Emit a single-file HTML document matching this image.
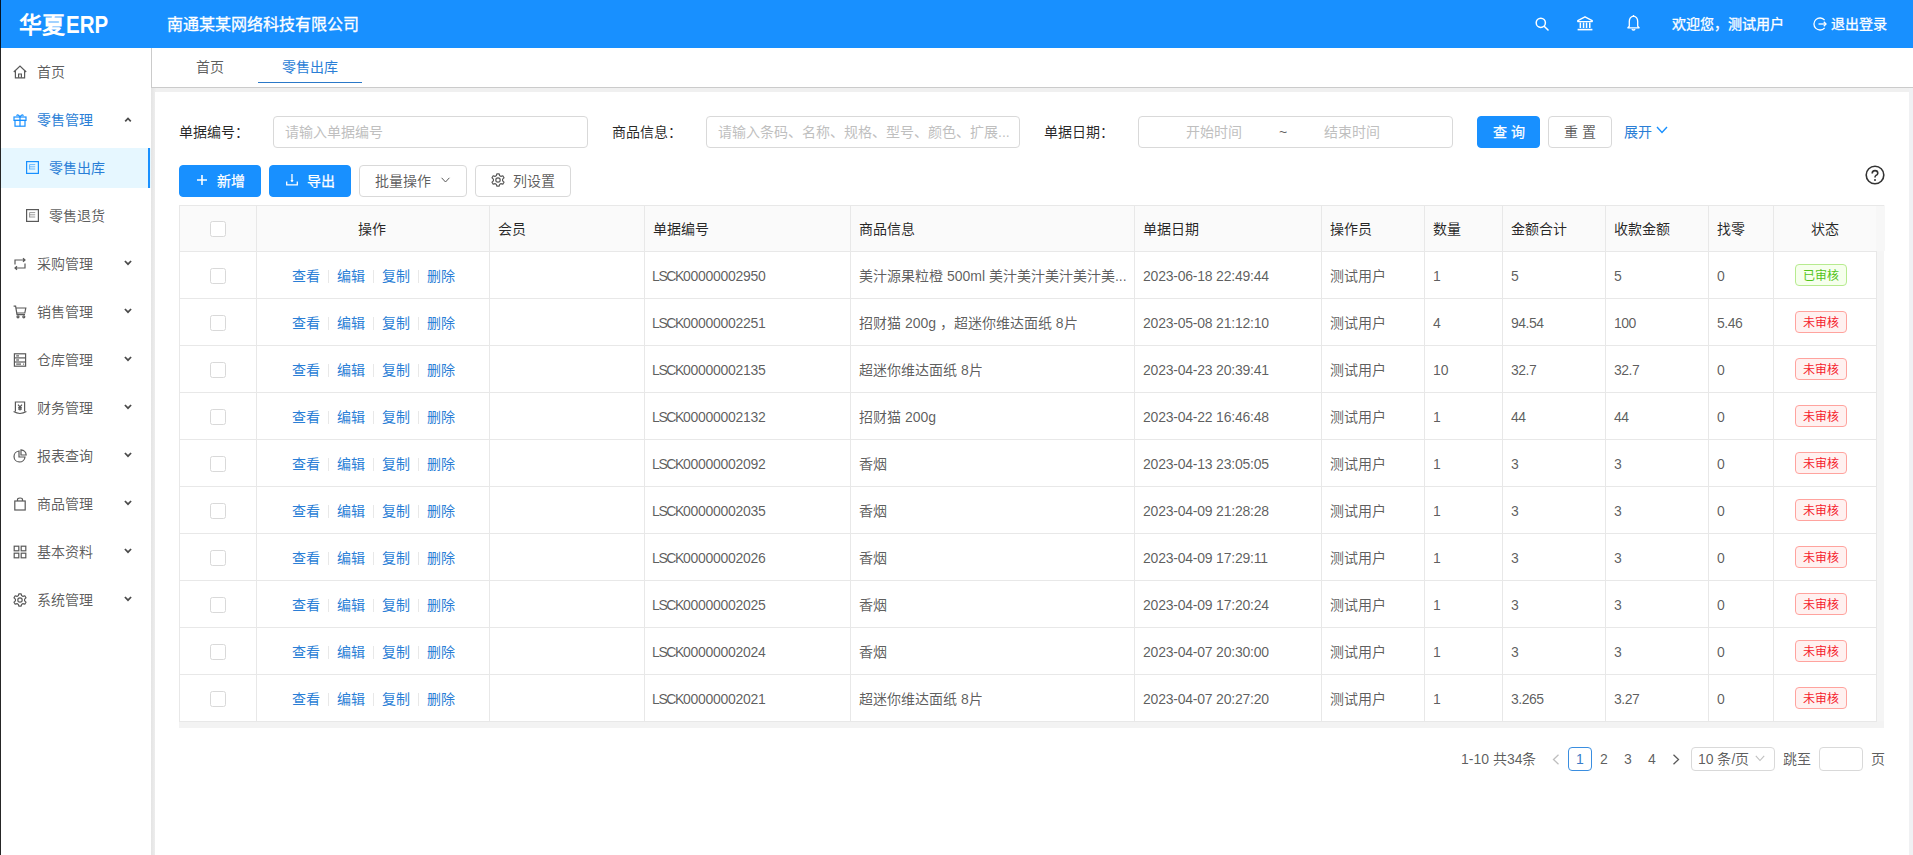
<!DOCTYPE html>
<html lang="zh-CN"><head><meta charset="utf-8"><title>零售出库</title><style>
*{margin:0;padding:0;box-sizing:border-box}
html,body{width:1913px;height:855px;overflow:hidden;background:#fff;font-family:"Liberation Sans", sans-serif;}
.a{position:absolute}
.t{position:absolute;white-space:nowrap;line-height:20px}
.ln{position:absolute;background:#e8e8e8}
.btn{position:absolute;height:32px;border-radius:4px;border:1px solid #d9d9d9;background:#fff}
.inp{position:absolute;height:32px;border-radius:4px;border:1px solid #d9d9d9;background:#fff}
.tag{position:absolute;height:22px;width:52px;border-radius:4px;border:1px solid;font-size:12px;line-height:22px;text-align:center}
.ok{color:#52c41a;background:#f6ffed;border-color:#b7eb8f}
.no{color:#f5222d;background:#fff1f0;border-color:#ffa39e}
svg{position:absolute;overflow:visible}
</style></head>
<body>
<div class="a" style="left:0;top:0;width:1913px;height:48px;background:#1890ff"></div>
<div class="t" style="left:19px;top:11px;line-height:28px;font-size:23px;font-weight:bold;color:#fff">华夏<span style="display:inline-block;font-size:23px;transform:scaleX(0.89);transform-origin:0 50%;margin-left:1px">ERP</span></div>
<div class="t" style="left:167px;top:15px;font-size:16px;color:#fff;-webkit-text-stroke:0.3px #fff">南通某某网络科技有限公司</div>
<svg style="left:1535px;top:17px" width="14" height="14" viewBox="0 0 14 14"><circle cx="5.8" cy="5.8" r="4.6" fill="none" stroke="#fff" stroke-width="1.5"/><line x1="9.2" y1="9.2" x2="13" y2="13" stroke="#fff" stroke-width="1.6" stroke-linecap="round"/></svg>
<svg style="left:1577px;top:16px" width="16" height="15" viewBox="0 0 16 15"><path d="M8 0.8 L15.2 4.6 L15.2 5.6 L0.8 5.6 L0.8 4.6 Z" fill="none" stroke="#fff" stroke-width="1.4" stroke-linejoin="round"/><rect x="2.6" y="6.5" width="1.5" height="5.5" fill="#fff"/><rect x="5.8" y="6.5" width="1.5" height="5.5" fill="#fff"/><rect x="8.8" y="6.5" width="1.5" height="5.5" fill="#fff"/><rect x="12" y="6.5" width="1.5" height="5.5" fill="#fff"/><rect x="0.6" y="12.8" width="14.8" height="1.6" fill="#fff"/></svg>
<svg style="left:1627px;top:15px" width="13" height="16" viewBox="0 0 13 16"><path d="M6.5 1.2 C3.6 1.8 2.3 4 2.3 6.6 L2.3 11.3 L0.9 12.8 L12.1 12.8 L10.7 11.3 L10.7 6.6 C10.7 4 9.4 1.8 6.5 1.2 Z" fill="none" stroke="#fff" stroke-width="1.3" stroke-linejoin="round"/><line x1="6.5" y1="0" x2="6.5" y2="1.5" stroke="#fff" stroke-width="1.3"/><path d="M4.8 14.2 Q6.5 15.8 8.2 14.2" fill="none" stroke="#fff" stroke-width="1.3"/></svg>
<div class="t" style="left:1672px;top:14px;font-size:14px;color:#fff;-webkit-text-stroke:0.3px #fff">欢迎您，测试用户</div>
<svg style="left:1813px;top:17px" width="14" height="14" viewBox="0 0 14 14"><path d="M11.6 3.2 A6 6 0 1 0 11.6 10.8" fill="none" stroke="#fff" stroke-width="1.3"/><line x1="5.5" y1="7" x2="13" y2="7" stroke="#fff" stroke-width="1.3"/><path d="M10.8 4.8 L13 7 L10.8 9.2" fill="none" stroke="#fff" stroke-width="1.3"/></svg>
<div class="t" style="left:1831px;top:14px;font-size:14px;color:#fff;-webkit-text-stroke:0.3px #fff">退出登录</div>
<div class="a" style="left:1px;top:148px;width:150px;height:40px;background:#e6f7ff"></div>
<div class="a" style="left:148px;top:148px;width:2px;height:40px;background:#1890ff"></div>
<svg style="left:13px;top:65px" width="14" height="14" viewBox="0 0 14 14"><path d="M0.8 7 L7 1 L13.2 7" stroke="#595959" fill="none" stroke-width="1.2"/><path d="M2.4 5.6 L2.4 12.8 L11.6 12.8 L11.6 5.6" stroke="#595959" fill="none" stroke-width="1.2"/><path d="M5.6 12.8 L5.6 9 L8.4 9 L8.4 12.8" stroke="#595959" fill="none" stroke-width="1.2"/></svg>
<div class="t" style="left:37px;top:62px;font-size:14px;color:rgba(0,0,0,0.65);font-weight:normal;">首页</div>
<svg style="left:13px;top:113px" width="14" height="14" viewBox="0 0 14 14"><rect x="1" y="4" width="12" height="3.4" stroke="#1890ff" fill="none" stroke-width="1.2"/><rect x="2" y="7.4" width="10" height="5.8" stroke="#1890ff" fill="none" stroke-width="1.2"/><line x1="7" y1="4" x2="7" y2="13.2" stroke="#1890ff" fill="none" stroke-width="1.2"/><path d="M7 4 C5.5 1 3.5 1.5 4 3 M7 4 C8.5 1 10.5 1.5 10 3" stroke="#1890ff" fill="none" stroke-width="1.2"/></svg>
<div class="t" style="left:37px;top:110px;font-size:14px;color:#2a7ed6;font-weight:normal;">零售管理</div>
<svg style="left:124px;top:117px" width="8" height="6" viewBox="0 0 8 6"><path d="M1.2 4.4 L4 1.4 L6.8 4.4" fill="none" stroke="#4a4a4a" stroke-width="1.7"/></svg>
<svg style="left:26px;top:161px" width="14" height="14" viewBox="0 0 14 14"><rect x="0.6" y="0.6" width="11.8" height="11.8" stroke="#1890ff" fill="none" stroke-width="1.2"/><path d="M3.6 3.6 L9.2 3.6 M3.6 5.8 L9.2 5.8 M3.6 8 L9.2 8 M3.6 3.6 L3.6 8.4" stroke="#1890ff" fill="none" stroke-width="0.8" opacity="0.75"/></svg>
<div class="t" style="left:49px;top:158px;font-size:14px;color:#2a7ed6;font-weight:normal;">零售出库</div>
<svg style="left:26px;top:209px" width="14" height="14" viewBox="0 0 14 14"><rect x="0.6" y="0.6" width="11.8" height="11.8" stroke="#595959" fill="none" stroke-width="1.2"/><path d="M3.6 3.6 L9.2 3.6 M3.6 5.8 L9.2 5.8 M3.6 8 L9.2 8 M3.6 3.6 L3.6 8.4" stroke="#595959" fill="none" stroke-width="0.8" opacity="0.75"/></svg>
<div class="t" style="left:49px;top:206px;font-size:14px;color:rgba(0,0,0,0.65);font-weight:normal;">零售退货</div>
<svg style="left:13px;top:257px" width="14" height="14" viewBox="0 0 14 14"><path d="M2 7.5 L2 3 L12 3 M10 1.2 L12 3 L10 4.8" stroke="#595959" fill="none" stroke-width="1.2"/><path d="M12 6.5 L12 11 L2 11 M4 9.2 L2 11 L4 12.8" stroke="#595959" fill="none" stroke-width="1.2"/></svg>
<div class="t" style="left:37px;top:254px;font-size:14px;color:rgba(0,0,0,0.65);font-weight:normal;">采购管理</div>
<svg style="left:124px;top:260px" width="8" height="6" viewBox="0 0 8 6"><path d="M0.9 1 L4 4.2 L7.1 1" fill="none" stroke="#4a4a4a" stroke-width="1.7"/></svg>
<svg style="left:13px;top:305px" width="14" height="14" viewBox="0 0 14 14"><path d="M0.6 1.2 L2.6 1.2 L4 9.6 L12 9.6 M3 3 L12.8 3 L11.8 8 L4 8" stroke="#595959" fill="none" stroke-width="1.2"/><circle cx="5" cy="11.8" r="1" stroke="#595959" fill="none" stroke-width="1.2"/><circle cx="10.8" cy="11.8" r="1" stroke="#595959" fill="none" stroke-width="1.2"/></svg>
<div class="t" style="left:37px;top:302px;font-size:14px;color:rgba(0,0,0,0.65);font-weight:normal;">销售管理</div>
<svg style="left:124px;top:308px" width="8" height="6" viewBox="0 0 8 6"><path d="M0.9 1 L4 4.2 L7.1 1" fill="none" stroke="#4a4a4a" stroke-width="1.7"/></svg>
<svg style="left:13px;top:353px" width="14" height="14" viewBox="0 0 14 14"><rect x="1.4" y="0.8" width="11.2" height="12.4" stroke="#595959" fill="none" stroke-width="1.2"/><line x1="1.4" y1="4.9" x2="12.6" y2="4.9" stroke="#595959" fill="none" stroke-width="1.2"/><line x1="1.4" y1="9" x2="12.6" y2="9" stroke="#595959" fill="none" stroke-width="1.2"/><line x1="3.2" y1="2.9" x2="6" y2="2.9" stroke="#595959" fill="none" stroke-width="1.2"/><line x1="3.2" y1="7" x2="6" y2="7" stroke="#595959" fill="none" stroke-width="1.2"/><line x1="3.2" y1="11.1" x2="8" y2="11.1" stroke="#595959" fill="none" stroke-width="1.2"/><circle cx="10.6" cy="11.1" r="0.7" fill="#595959"/></svg>
<div class="t" style="left:37px;top:350px;font-size:14px;color:rgba(0,0,0,0.65);font-weight:normal;">仓库管理</div>
<svg style="left:124px;top:356px" width="8" height="6" viewBox="0 0 8 6"><path d="M0.9 1 L4 4.2 L7.1 1" fill="none" stroke="#4a4a4a" stroke-width="1.7"/></svg>
<svg style="left:13px;top:401px" width="14" height="14" viewBox="0 0 14 14"><path d="M2.4 10.6 L2.4 1 L11.6 1 L11.6 10.6" stroke="#595959" fill="none" stroke-width="1.2"/><path d="M0.6 10.6 Q7 14.4 13.4 10.6" stroke="#595959" fill="none" stroke-width="1.2"/><path d="M5 3.6 L7 6 L9 3.6 M7 6 L7 9.6 M5.2 6.6 L8.8 6.6 M5.2 8.2 L8.8 8.2" stroke="#595959" fill="none" stroke-width="1.2"/></svg>
<div class="t" style="left:37px;top:398px;font-size:14px;color:rgba(0,0,0,0.65);font-weight:normal;">财务管理</div>
<svg style="left:124px;top:404px" width="8" height="6" viewBox="0 0 8 6"><path d="M0.9 1 L4 4.2 L7.1 1" fill="none" stroke="#4a4a4a" stroke-width="1.7"/></svg>
<svg style="left:13px;top:449px" width="14" height="14" viewBox="0 0 14 14"><path d="M6 2 A5.5 5.5 0 1 0 12 8 L6 8 Z" stroke="#595959" fill="none" stroke-width="1.2"/><path d="M8 0.8 A5.5 5.5 0 0 1 13.2 6 L8 6 Z" stroke="#595959" fill="none" stroke-width="1.2"/></svg>
<div class="t" style="left:37px;top:446px;font-size:14px;color:rgba(0,0,0,0.65);font-weight:normal;">报表查询</div>
<svg style="left:124px;top:452px" width="8" height="6" viewBox="0 0 8 6"><path d="M0.9 1 L4 4.2 L7.1 1" fill="none" stroke="#4a4a4a" stroke-width="1.7"/></svg>
<svg style="left:13px;top:497px" width="14" height="14" viewBox="0 0 14 14"><rect x="1.8" y="4" width="10.4" height="9" stroke="#595959" fill="none" stroke-width="1.2"/><path d="M4.5 4 L4.5 2.5 Q4.5 1 7 1 Q9.5 1 9.5 2.5 L9.5 4" stroke="#595959" fill="none" stroke-width="1.2"/></svg>
<div class="t" style="left:37px;top:494px;font-size:14px;color:rgba(0,0,0,0.65);font-weight:normal;">商品管理</div>
<svg style="left:124px;top:500px" width="8" height="6" viewBox="0 0 8 6"><path d="M0.9 1 L4 4.2 L7.1 1" fill="none" stroke="#4a4a4a" stroke-width="1.7"/></svg>
<svg style="left:13px;top:545px" width="14" height="14" viewBox="0 0 14 14"><rect x="1.2" y="1.2" width="4.6" height="4.6" stroke="#595959" fill="none" stroke-width="1.2"/><rect x="8.2" y="1.2" width="4.6" height="4.6" stroke="#595959" fill="none" stroke-width="1.2"/><rect x="1.2" y="8.2" width="4.6" height="4.6" stroke="#595959" fill="none" stroke-width="1.2"/><rect x="8.2" y="8.2" width="4.6" height="4.6" stroke="#595959" fill="none" stroke-width="1.2"/></svg>
<div class="t" style="left:37px;top:542px;font-size:14px;color:rgba(0,0,0,0.65);font-weight:normal;">基本资料</div>
<svg style="left:124px;top:548px" width="8" height="6" viewBox="0 0 8 6"><path d="M0.9 1 L4 4.2 L7.1 1" fill="none" stroke="#4a4a4a" stroke-width="1.7"/></svg>
<svg style="left:13px;top:593px" width="14" height="14" viewBox="0 0 14 14"><path d="M5.8 0.8 L8.2 0.8 L8.6 2.6 L10 3.4 L11.8 2.8 L13 4.9 L11.6 6.1 L11.6 7.9 L13 9.1 L11.8 11.2 L10 10.6 L8.6 11.4 L8.2 13.2 L5.8 13.2 L5.4 11.4 L4 10.6 L2.2 11.2 L1 9.1 L2.4 7.9 L2.4 6.1 L1 4.9 L2.2 2.8 L4 3.4 L5.4 2.6 Z" stroke="#595959" fill="none" stroke-width="1.2" stroke-linejoin="round"/><circle cx="7" cy="7" r="2.2" stroke="#595959" fill="none" stroke-width="1.2"/></svg>
<div class="t" style="left:37px;top:590px;font-size:14px;color:rgba(0,0,0,0.65);font-weight:normal;">系统管理</div>
<svg style="left:124px;top:596px" width="8" height="6" viewBox="0 0 8 6"><path d="M0.9 1 L4 4.2 L7.1 1" fill="none" stroke="#4a4a4a" stroke-width="1.7"/></svg>
<div class="a" style="left:151px;top:48px;width:1762px;height:40px;background:#fff;border-left:1px solid #cbcbcb;border-bottom:1px solid #cbcbcb"></div>
<div class="a" style="left:151px;top:88px;width:1762px;height:767px;background:#f0f0f0"></div>
<div class="a" style="left:151px;top:88px;width:5px;height:767px;background:linear-gradient(90deg,#e4e4e4,#efefef)"></div>
<div class="a" style="left:155px;top:92px;width:1754px;height:763px;background:#fff"></div>
<div class="a" style="left:1909px;top:88px;width:4px;height:767px;background:#f0f1f3"></div>
<div class="t" style="left:196px;top:57px;font-size:14px;color:rgba(0,0,0,0.65);font-weight:normal;">首页</div>
<div class="t" style="left:282px;top:57px;font-size:14px;color:#2a7ed6;font-weight:normal;">零售出库</div>
<div class="a" style="left:258px;top:82px;width:104px;height:1px;background:#2a78c8"></div>
<div class="t" style="left:179px;top:122px;font-size:14px;color:rgba(0,0,0,0.85);font-weight:normal;">单据编号：</div>
<div class="inp" style="left:273px;top:116px;width:315px"></div>
<div class="t" style="left:285px;top:122px;font-size:14px;color:#bfbfbf;font-weight:normal;">请输入单据编号</div>
<div class="t" style="left:612px;top:122px;font-size:14px;color:rgba(0,0,0,0.85);font-weight:normal;">商品信息：</div>
<div class="inp" style="left:706px;top:116px;width:314px"></div>
<div class="t" style="left:718px;top:122px;font-size:14px;color:#bfbfbf;font-weight:normal;">请输入条码、名称、规格、型号、颜色、扩展...</div>
<div class="t" style="left:1044px;top:122px;font-size:14px;color:rgba(0,0,0,0.85);font-weight:normal;">单据日期：</div>
<div class="inp" style="left:1138px;top:116px;width:315px"></div>
<div class="t" style="left:1186px;top:122px;font-size:14px;color:#bfbfbf;font-weight:normal;">开始时间</div>
<div class="t" style="left:1279px;top:122px;font-size:14px;color:rgba(0,0,0,0.65);font-weight:normal;">~</div>
<div class="t" style="left:1324px;top:122px;font-size:14px;color:#bfbfbf;font-weight:normal;">结束时间</div>
<div class="btn" style="left:1477px;top:116px;width:63px;background:#1890ff;border-color:#1890ff"></div>
<div class="t" style="left:1493px;top:122px;font-size:14px;color:#fff;font-weight:normal;-webkit-text-stroke:0.25px #fff">查 询</div>
<div class="btn" style="left:1548px;top:116px;width:64px"></div>
<div class="t" style="left:1564px;top:122px;font-size:14px;color:rgba(0,0,0,0.65);font-weight:normal;">重 置</div>
<div class="t" style="left:1624px;top:122px;font-size:14px;color:#2a7ed6;font-weight:normal;">展开</div>
<svg style="left:1656px;top:126px" width="12" height="8" viewBox="0 0 12 8"><path d="M1 1 L6 6.5 L11 1" fill="none" stroke="#1890ff" stroke-width="1.4"/></svg>
<div class="btn" style="left:179px;top:165px;width:82px;background:#1890ff;border-color:#1890ff"></div>
<svg style="left:197px;top:174px" width="10" height="12" viewBox="0 0 10 12"><path d="M5 1 L5 11 M0 6 L10 6" stroke="#fff" stroke-width="1.6"/></svg>
<div class="t" style="left:217px;top:171px;font-size:14px;color:#fff;font-weight:normal;-webkit-text-stroke:0.25px #fff">新增</div>
<div class="btn" style="left:269px;top:165px;width:82px;background:#1890ff;border-color:#1890ff"></div>
<svg style="left:286px;top:174px" width="12" height="12" viewBox="0 0 12 12"><path d="M6 0 L6 7.2 M4.9 6.2 L6 7.4 L7.1 6.2 M0.7 7.4 L0.7 10.9 L11.3 10.9 L11.3 7.4" fill="none" stroke="#fff" stroke-width="1.3"/></svg>
<div class="t" style="left:307px;top:171px;font-size:14px;color:#fff;font-weight:normal;-webkit-text-stroke:0.25px #fff">导出</div>
<div class="btn" style="left:359px;top:165px;width:108px"></div>
<div class="t" style="left:375px;top:171px;font-size:14px;color:rgba(0,0,0,0.65);font-weight:normal;">批量操作</div>
<svg style="left:441px;top:177px" width="9" height="6" viewBox="0 0 9 6"><path d="M0.6 0.8 L4.5 5 L8.4 0.8" fill="none" stroke="#595959" stroke-width="1"/></svg>
<div class="btn" style="left:475px;top:165px;width:96px"></div>
<svg style="left:491px;top:173px" width="14" height="14" viewBox="0 0 14 14"><path d="M5.8 0.8 L8.2 0.8 L8.6 2.6 L10 3.4 L11.8 2.8 L13 4.9 L11.6 6.1 L11.6 7.9 L13 9.1 L11.8 11.2 L10 10.6 L8.6 11.4 L8.2 13.2 L5.8 13.2 L5.4 11.4 L4 10.6 L2.2 11.2 L1 9.1 L2.4 7.9 L2.4 6.1 L1 4.9 L2.2 2.8 L4 3.4 L5.4 2.6 Z" stroke="#595959" fill="none" stroke-width="1.2" stroke-linejoin="round"/><circle cx="7" cy="7" r="2.2" stroke="#595959" fill="none" stroke-width="1.2"/></svg>
<div class="t" style="left:513px;top:171px;font-size:14px;color:rgba(0,0,0,0.65);font-weight:normal;">列设置</div>
<svg style="left:1865px;top:165px" width="20" height="20" viewBox="0 0 20 20"><circle cx="10" cy="10" r="8.8" fill="none" stroke="#333" stroke-width="1.6"/><path d="M7.2 8.4 Q7.2 5.6 10 5.6 Q12.8 5.6 12.8 8.2 Q12.8 9.8 10.8 10.6 Q10 11 10 12.4" fill="none" stroke="#333" stroke-width="1.6"/><circle cx="10" cy="14.9" r="1" fill="#333"/></svg>
<div class="a" style="left:179px;top:205px;width:1706px;height:46px;background:#fafafa"></div>
<div class="a" style="left:1876px;top:205px;width:9px;height:46px;background:#f7f7f7"></div>
<div class="a" style="left:1876px;top:251px;width:8px;height:470px;background:#f5f5f5"></div>
<div class="a" style="left:179px;top:721px;width:1705px;height:7px;background:#f3f3f3"></div>
<div class="ln" style="left:179px;top:205px;width:1705px;height:1px"></div>
<div class="ln" style="left:179px;top:251px;width:1698px;height:1px"></div>
<div class="ln" style="left:179px;top:298px;width:1698px;height:1px"></div>
<div class="ln" style="left:179px;top:345px;width:1698px;height:1px"></div>
<div class="ln" style="left:179px;top:392px;width:1698px;height:1px"></div>
<div class="ln" style="left:179px;top:439px;width:1698px;height:1px"></div>
<div class="ln" style="left:179px;top:486px;width:1698px;height:1px"></div>
<div class="ln" style="left:179px;top:533px;width:1698px;height:1px"></div>
<div class="ln" style="left:179px;top:580px;width:1698px;height:1px"></div>
<div class="ln" style="left:179px;top:627px;width:1698px;height:1px"></div>
<div class="ln" style="left:179px;top:674px;width:1698px;height:1px"></div>
<div class="ln" style="left:179px;top:721px;width:1698px;height:1px"></div>
<div class="ln" style="left:179px;top:205px;width:1px;height:516px"></div>
<div class="ln" style="left:256px;top:205px;width:1px;height:516px"></div>
<div class="ln" style="left:489px;top:205px;width:1px;height:516px"></div>
<div class="ln" style="left:644px;top:205px;width:1px;height:516px"></div>
<div class="ln" style="left:850px;top:205px;width:1px;height:516px"></div>
<div class="ln" style="left:1134px;top:205px;width:1px;height:516px"></div>
<div class="ln" style="left:1321px;top:205px;width:1px;height:516px"></div>
<div class="ln" style="left:1424px;top:205px;width:1px;height:516px"></div>
<div class="ln" style="left:1502px;top:205px;width:1px;height:516px"></div>
<div class="ln" style="left:1605px;top:205px;width:1px;height:516px"></div>
<div class="ln" style="left:1708px;top:205px;width:1px;height:516px"></div>
<div class="ln" style="left:1773px;top:205px;width:1px;height:516px"></div>
<div class="ln" style="left:1876px;top:251px;width:1px;height:470px"></div>
<svg style="left:210px;top:221px" width="16" height="16" viewBox="0 0 16 16"><rect x="0.5" y="0.5" width="15" height="15" rx="2" fill="#fff" stroke="#d9d9d9"/></svg>
<div class="t" style="left:358px;top:219px;font-size:14px;color:rgba(0,0,0,0.85);font-weight:normal;">操作</div>
<div class="t" style="left:498px;top:219px;font-size:14px;color:rgba(0,0,0,0.85);font-weight:normal;">会员</div>
<div class="t" style="left:653px;top:219px;font-size:14px;color:rgba(0,0,0,0.85);font-weight:normal;">单据编号</div>
<div class="t" style="left:859px;top:219px;font-size:14px;color:rgba(0,0,0,0.85);font-weight:normal;">商品信息</div>
<div class="t" style="left:1143px;top:219px;font-size:14px;color:rgba(0,0,0,0.85);font-weight:normal;">单据日期</div>
<div class="t" style="left:1330px;top:219px;font-size:14px;color:rgba(0,0,0,0.85);font-weight:normal;">操作员</div>
<div class="t" style="left:1433px;top:219px;font-size:14px;color:rgba(0,0,0,0.85);font-weight:normal;">数量</div>
<div class="t" style="left:1511px;top:219px;font-size:14px;color:rgba(0,0,0,0.85);font-weight:normal;">金额合计</div>
<div class="t" style="left:1614px;top:219px;font-size:14px;color:rgba(0,0,0,0.85);font-weight:normal;">收款金额</div>
<div class="t" style="left:1717px;top:219px;font-size:14px;color:rgba(0,0,0,0.85);font-weight:normal;">找零</div>
<div class="t" style="left:1811px;top:219px;font-size:14px;color:rgba(0,0,0,0.85);font-weight:normal;">状态</div>
<svg style="left:210px;top:268px" width="16" height="16" viewBox="0 0 16 16"><rect x="0.5" y="0.5" width="15" height="15" rx="2" fill="#fff" stroke="#d9d9d9"/></svg>
<div class="t" style="left:292px;top:266px;font-size:14px;color:#2a7ed6;font-weight:normal;">查看</div>
<div class="a" style="left:328px;top:270px;width:1px;height:13px;background:#e8e8e8"></div>
<div class="t" style="left:337px;top:266px;font-size:14px;color:#2a7ed6;font-weight:normal;">编辑</div>
<div class="a" style="left:373px;top:270px;width:1px;height:13px;background:#e8e8e8"></div>
<div class="t" style="left:382px;top:266px;font-size:14px;color:#2a7ed6;font-weight:normal;">复制</div>
<div class="a" style="left:418px;top:270px;width:1px;height:13px;background:#e8e8e8"></div>
<div class="t" style="left:427px;top:266px;font-size:14px;color:#2a7ed6;font-weight:normal;">删除</div>
<div class="t" style="left:652px;top:266px;font-size:14px;color:rgba(0,0,0,0.65);font-weight:normal;"><span style="letter-spacing:-1.4px">LSCK</span><span style="letter-spacing:-0.29px">00000002950</span></div>
<div class="t" style="left:859px;top:266px;font-size:14px;color:rgba(0,0,0,0.65);font-weight:normal;">美汁源果粒橙 500ml 美汁美汁美汁美汁美...</div>
<div class="t" style="left:1143px;top:266px;font-size:14px;color:rgba(0,0,0,0.65);font-weight:normal;letter-spacing:-0.22px">2023-06-18 22:49:44</div>
<div class="t" style="left:1330px;top:266px;font-size:14px;color:rgba(0,0,0,0.65);font-weight:normal;">测试用户</div>
<div class="t" style="left:1433px;top:266px;font-size:14px;color:rgba(0,0,0,0.65);font-weight:normal;">1</div>
<div class="t" style="left:1511px;top:266px;font-size:14px;color:rgba(0,0,0,0.65);font-weight:normal;letter-spacing:-0.5px">5</div>
<div class="t" style="left:1614px;top:266px;font-size:14px;color:rgba(0,0,0,0.65);font-weight:normal;letter-spacing:-0.5px">5</div>
<div class="t" style="left:1717px;top:266px;font-size:14px;color:rgba(0,0,0,0.65);font-weight:normal;letter-spacing:-0.5px">0</div>
<div class="tag ok" style="left:1795px;top:264px">已审核</div>
<svg style="left:210px;top:315px" width="16" height="16" viewBox="0 0 16 16"><rect x="0.5" y="0.5" width="15" height="15" rx="2" fill="#fff" stroke="#d9d9d9"/></svg>
<div class="t" style="left:292px;top:313px;font-size:14px;color:#2a7ed6;font-weight:normal;">查看</div>
<div class="a" style="left:328px;top:317px;width:1px;height:13px;background:#e8e8e8"></div>
<div class="t" style="left:337px;top:313px;font-size:14px;color:#2a7ed6;font-weight:normal;">编辑</div>
<div class="a" style="left:373px;top:317px;width:1px;height:13px;background:#e8e8e8"></div>
<div class="t" style="left:382px;top:313px;font-size:14px;color:#2a7ed6;font-weight:normal;">复制</div>
<div class="a" style="left:418px;top:317px;width:1px;height:13px;background:#e8e8e8"></div>
<div class="t" style="left:427px;top:313px;font-size:14px;color:#2a7ed6;font-weight:normal;">删除</div>
<div class="t" style="left:652px;top:313px;font-size:14px;color:rgba(0,0,0,0.65);font-weight:normal;"><span style="letter-spacing:-1.4px">LSCK</span><span style="letter-spacing:-0.29px">00000002251</span></div>
<div class="t" style="left:859px;top:313px;font-size:14px;color:rgba(0,0,0,0.65);font-weight:normal;">招财猫 200g ，超迷你维达面纸 8片</div>
<div class="t" style="left:1143px;top:313px;font-size:14px;color:rgba(0,0,0,0.65);font-weight:normal;letter-spacing:-0.22px">2023-05-08 21:12:10</div>
<div class="t" style="left:1330px;top:313px;font-size:14px;color:rgba(0,0,0,0.65);font-weight:normal;">测试用户</div>
<div class="t" style="left:1433px;top:313px;font-size:14px;color:rgba(0,0,0,0.65);font-weight:normal;">4</div>
<div class="t" style="left:1511px;top:313px;font-size:14px;color:rgba(0,0,0,0.65);font-weight:normal;letter-spacing:-0.5px">94.54</div>
<div class="t" style="left:1614px;top:313px;font-size:14px;color:rgba(0,0,0,0.65);font-weight:normal;letter-spacing:-0.5px">100</div>
<div class="t" style="left:1717px;top:313px;font-size:14px;color:rgba(0,0,0,0.65);font-weight:normal;letter-spacing:-0.5px">5.46</div>
<div class="tag no" style="left:1795px;top:311px">未审核</div>
<svg style="left:210px;top:362px" width="16" height="16" viewBox="0 0 16 16"><rect x="0.5" y="0.5" width="15" height="15" rx="2" fill="#fff" stroke="#d9d9d9"/></svg>
<div class="t" style="left:292px;top:360px;font-size:14px;color:#2a7ed6;font-weight:normal;">查看</div>
<div class="a" style="left:328px;top:364px;width:1px;height:13px;background:#e8e8e8"></div>
<div class="t" style="left:337px;top:360px;font-size:14px;color:#2a7ed6;font-weight:normal;">编辑</div>
<div class="a" style="left:373px;top:364px;width:1px;height:13px;background:#e8e8e8"></div>
<div class="t" style="left:382px;top:360px;font-size:14px;color:#2a7ed6;font-weight:normal;">复制</div>
<div class="a" style="left:418px;top:364px;width:1px;height:13px;background:#e8e8e8"></div>
<div class="t" style="left:427px;top:360px;font-size:14px;color:#2a7ed6;font-weight:normal;">删除</div>
<div class="t" style="left:652px;top:360px;font-size:14px;color:rgba(0,0,0,0.65);font-weight:normal;"><span style="letter-spacing:-1.4px">LSCK</span><span style="letter-spacing:-0.29px">00000002135</span></div>
<div class="t" style="left:859px;top:360px;font-size:14px;color:rgba(0,0,0,0.65);font-weight:normal;">超迷你维达面纸 8片</div>
<div class="t" style="left:1143px;top:360px;font-size:14px;color:rgba(0,0,0,0.65);font-weight:normal;letter-spacing:-0.22px">2023-04-23 20:39:41</div>
<div class="t" style="left:1330px;top:360px;font-size:14px;color:rgba(0,0,0,0.65);font-weight:normal;">测试用户</div>
<div class="t" style="left:1433px;top:360px;font-size:14px;color:rgba(0,0,0,0.65);font-weight:normal;">10</div>
<div class="t" style="left:1511px;top:360px;font-size:14px;color:rgba(0,0,0,0.65);font-weight:normal;letter-spacing:-0.5px">32.7</div>
<div class="t" style="left:1614px;top:360px;font-size:14px;color:rgba(0,0,0,0.65);font-weight:normal;letter-spacing:-0.5px">32.7</div>
<div class="t" style="left:1717px;top:360px;font-size:14px;color:rgba(0,0,0,0.65);font-weight:normal;letter-spacing:-0.5px">0</div>
<div class="tag no" style="left:1795px;top:358px">未审核</div>
<svg style="left:210px;top:409px" width="16" height="16" viewBox="0 0 16 16"><rect x="0.5" y="0.5" width="15" height="15" rx="2" fill="#fff" stroke="#d9d9d9"/></svg>
<div class="t" style="left:292px;top:407px;font-size:14px;color:#2a7ed6;font-weight:normal;">查看</div>
<div class="a" style="left:328px;top:411px;width:1px;height:13px;background:#e8e8e8"></div>
<div class="t" style="left:337px;top:407px;font-size:14px;color:#2a7ed6;font-weight:normal;">编辑</div>
<div class="a" style="left:373px;top:411px;width:1px;height:13px;background:#e8e8e8"></div>
<div class="t" style="left:382px;top:407px;font-size:14px;color:#2a7ed6;font-weight:normal;">复制</div>
<div class="a" style="left:418px;top:411px;width:1px;height:13px;background:#e8e8e8"></div>
<div class="t" style="left:427px;top:407px;font-size:14px;color:#2a7ed6;font-weight:normal;">删除</div>
<div class="t" style="left:652px;top:407px;font-size:14px;color:rgba(0,0,0,0.65);font-weight:normal;"><span style="letter-spacing:-1.4px">LSCK</span><span style="letter-spacing:-0.29px">00000002132</span></div>
<div class="t" style="left:859px;top:407px;font-size:14px;color:rgba(0,0,0,0.65);font-weight:normal;">招财猫 200g</div>
<div class="t" style="left:1143px;top:407px;font-size:14px;color:rgba(0,0,0,0.65);font-weight:normal;letter-spacing:-0.22px">2023-04-22 16:46:48</div>
<div class="t" style="left:1330px;top:407px;font-size:14px;color:rgba(0,0,0,0.65);font-weight:normal;">测试用户</div>
<div class="t" style="left:1433px;top:407px;font-size:14px;color:rgba(0,0,0,0.65);font-weight:normal;">1</div>
<div class="t" style="left:1511px;top:407px;font-size:14px;color:rgba(0,0,0,0.65);font-weight:normal;letter-spacing:-0.5px">44</div>
<div class="t" style="left:1614px;top:407px;font-size:14px;color:rgba(0,0,0,0.65);font-weight:normal;letter-spacing:-0.5px">44</div>
<div class="t" style="left:1717px;top:407px;font-size:14px;color:rgba(0,0,0,0.65);font-weight:normal;letter-spacing:-0.5px">0</div>
<div class="tag no" style="left:1795px;top:405px">未审核</div>
<svg style="left:210px;top:456px" width="16" height="16" viewBox="0 0 16 16"><rect x="0.5" y="0.5" width="15" height="15" rx="2" fill="#fff" stroke="#d9d9d9"/></svg>
<div class="t" style="left:292px;top:454px;font-size:14px;color:#2a7ed6;font-weight:normal;">查看</div>
<div class="a" style="left:328px;top:458px;width:1px;height:13px;background:#e8e8e8"></div>
<div class="t" style="left:337px;top:454px;font-size:14px;color:#2a7ed6;font-weight:normal;">编辑</div>
<div class="a" style="left:373px;top:458px;width:1px;height:13px;background:#e8e8e8"></div>
<div class="t" style="left:382px;top:454px;font-size:14px;color:#2a7ed6;font-weight:normal;">复制</div>
<div class="a" style="left:418px;top:458px;width:1px;height:13px;background:#e8e8e8"></div>
<div class="t" style="left:427px;top:454px;font-size:14px;color:#2a7ed6;font-weight:normal;">删除</div>
<div class="t" style="left:652px;top:454px;font-size:14px;color:rgba(0,0,0,0.65);font-weight:normal;"><span style="letter-spacing:-1.4px">LSCK</span><span style="letter-spacing:-0.29px">00000002092</span></div>
<div class="t" style="left:859px;top:454px;font-size:14px;color:rgba(0,0,0,0.65);font-weight:normal;">香烟</div>
<div class="t" style="left:1143px;top:454px;font-size:14px;color:rgba(0,0,0,0.65);font-weight:normal;letter-spacing:-0.22px">2023-04-13 23:05:05</div>
<div class="t" style="left:1330px;top:454px;font-size:14px;color:rgba(0,0,0,0.65);font-weight:normal;">测试用户</div>
<div class="t" style="left:1433px;top:454px;font-size:14px;color:rgba(0,0,0,0.65);font-weight:normal;">1</div>
<div class="t" style="left:1511px;top:454px;font-size:14px;color:rgba(0,0,0,0.65);font-weight:normal;letter-spacing:-0.5px">3</div>
<div class="t" style="left:1614px;top:454px;font-size:14px;color:rgba(0,0,0,0.65);font-weight:normal;letter-spacing:-0.5px">3</div>
<div class="t" style="left:1717px;top:454px;font-size:14px;color:rgba(0,0,0,0.65);font-weight:normal;letter-spacing:-0.5px">0</div>
<div class="tag no" style="left:1795px;top:452px">未审核</div>
<svg style="left:210px;top:503px" width="16" height="16" viewBox="0 0 16 16"><rect x="0.5" y="0.5" width="15" height="15" rx="2" fill="#fff" stroke="#d9d9d9"/></svg>
<div class="t" style="left:292px;top:501px;font-size:14px;color:#2a7ed6;font-weight:normal;">查看</div>
<div class="a" style="left:328px;top:505px;width:1px;height:13px;background:#e8e8e8"></div>
<div class="t" style="left:337px;top:501px;font-size:14px;color:#2a7ed6;font-weight:normal;">编辑</div>
<div class="a" style="left:373px;top:505px;width:1px;height:13px;background:#e8e8e8"></div>
<div class="t" style="left:382px;top:501px;font-size:14px;color:#2a7ed6;font-weight:normal;">复制</div>
<div class="a" style="left:418px;top:505px;width:1px;height:13px;background:#e8e8e8"></div>
<div class="t" style="left:427px;top:501px;font-size:14px;color:#2a7ed6;font-weight:normal;">删除</div>
<div class="t" style="left:652px;top:501px;font-size:14px;color:rgba(0,0,0,0.65);font-weight:normal;"><span style="letter-spacing:-1.4px">LSCK</span><span style="letter-spacing:-0.29px">00000002035</span></div>
<div class="t" style="left:859px;top:501px;font-size:14px;color:rgba(0,0,0,0.65);font-weight:normal;">香烟</div>
<div class="t" style="left:1143px;top:501px;font-size:14px;color:rgba(0,0,0,0.65);font-weight:normal;letter-spacing:-0.22px">2023-04-09 21:28:28</div>
<div class="t" style="left:1330px;top:501px;font-size:14px;color:rgba(0,0,0,0.65);font-weight:normal;">测试用户</div>
<div class="t" style="left:1433px;top:501px;font-size:14px;color:rgba(0,0,0,0.65);font-weight:normal;">1</div>
<div class="t" style="left:1511px;top:501px;font-size:14px;color:rgba(0,0,0,0.65);font-weight:normal;letter-spacing:-0.5px">3</div>
<div class="t" style="left:1614px;top:501px;font-size:14px;color:rgba(0,0,0,0.65);font-weight:normal;letter-spacing:-0.5px">3</div>
<div class="t" style="left:1717px;top:501px;font-size:14px;color:rgba(0,0,0,0.65);font-weight:normal;letter-spacing:-0.5px">0</div>
<div class="tag no" style="left:1795px;top:499px">未审核</div>
<svg style="left:210px;top:550px" width="16" height="16" viewBox="0 0 16 16"><rect x="0.5" y="0.5" width="15" height="15" rx="2" fill="#fff" stroke="#d9d9d9"/></svg>
<div class="t" style="left:292px;top:548px;font-size:14px;color:#2a7ed6;font-weight:normal;">查看</div>
<div class="a" style="left:328px;top:552px;width:1px;height:13px;background:#e8e8e8"></div>
<div class="t" style="left:337px;top:548px;font-size:14px;color:#2a7ed6;font-weight:normal;">编辑</div>
<div class="a" style="left:373px;top:552px;width:1px;height:13px;background:#e8e8e8"></div>
<div class="t" style="left:382px;top:548px;font-size:14px;color:#2a7ed6;font-weight:normal;">复制</div>
<div class="a" style="left:418px;top:552px;width:1px;height:13px;background:#e8e8e8"></div>
<div class="t" style="left:427px;top:548px;font-size:14px;color:#2a7ed6;font-weight:normal;">删除</div>
<div class="t" style="left:652px;top:548px;font-size:14px;color:rgba(0,0,0,0.65);font-weight:normal;"><span style="letter-spacing:-1.4px">LSCK</span><span style="letter-spacing:-0.29px">00000002026</span></div>
<div class="t" style="left:859px;top:548px;font-size:14px;color:rgba(0,0,0,0.65);font-weight:normal;">香烟</div>
<div class="t" style="left:1143px;top:548px;font-size:14px;color:rgba(0,0,0,0.65);font-weight:normal;letter-spacing:-0.22px">2023-04-09 17:29:11</div>
<div class="t" style="left:1330px;top:548px;font-size:14px;color:rgba(0,0,0,0.65);font-weight:normal;">测试用户</div>
<div class="t" style="left:1433px;top:548px;font-size:14px;color:rgba(0,0,0,0.65);font-weight:normal;">1</div>
<div class="t" style="left:1511px;top:548px;font-size:14px;color:rgba(0,0,0,0.65);font-weight:normal;letter-spacing:-0.5px">3</div>
<div class="t" style="left:1614px;top:548px;font-size:14px;color:rgba(0,0,0,0.65);font-weight:normal;letter-spacing:-0.5px">3</div>
<div class="t" style="left:1717px;top:548px;font-size:14px;color:rgba(0,0,0,0.65);font-weight:normal;letter-spacing:-0.5px">0</div>
<div class="tag no" style="left:1795px;top:546px">未审核</div>
<svg style="left:210px;top:597px" width="16" height="16" viewBox="0 0 16 16"><rect x="0.5" y="0.5" width="15" height="15" rx="2" fill="#fff" stroke="#d9d9d9"/></svg>
<div class="t" style="left:292px;top:595px;font-size:14px;color:#2a7ed6;font-weight:normal;">查看</div>
<div class="a" style="left:328px;top:599px;width:1px;height:13px;background:#e8e8e8"></div>
<div class="t" style="left:337px;top:595px;font-size:14px;color:#2a7ed6;font-weight:normal;">编辑</div>
<div class="a" style="left:373px;top:599px;width:1px;height:13px;background:#e8e8e8"></div>
<div class="t" style="left:382px;top:595px;font-size:14px;color:#2a7ed6;font-weight:normal;">复制</div>
<div class="a" style="left:418px;top:599px;width:1px;height:13px;background:#e8e8e8"></div>
<div class="t" style="left:427px;top:595px;font-size:14px;color:#2a7ed6;font-weight:normal;">删除</div>
<div class="t" style="left:652px;top:595px;font-size:14px;color:rgba(0,0,0,0.65);font-weight:normal;"><span style="letter-spacing:-1.4px">LSCK</span><span style="letter-spacing:-0.29px">00000002025</span></div>
<div class="t" style="left:859px;top:595px;font-size:14px;color:rgba(0,0,0,0.65);font-weight:normal;">香烟</div>
<div class="t" style="left:1143px;top:595px;font-size:14px;color:rgba(0,0,0,0.65);font-weight:normal;letter-spacing:-0.22px">2023-04-09 17:20:24</div>
<div class="t" style="left:1330px;top:595px;font-size:14px;color:rgba(0,0,0,0.65);font-weight:normal;">测试用户</div>
<div class="t" style="left:1433px;top:595px;font-size:14px;color:rgba(0,0,0,0.65);font-weight:normal;">1</div>
<div class="t" style="left:1511px;top:595px;font-size:14px;color:rgba(0,0,0,0.65);font-weight:normal;letter-spacing:-0.5px">3</div>
<div class="t" style="left:1614px;top:595px;font-size:14px;color:rgba(0,0,0,0.65);font-weight:normal;letter-spacing:-0.5px">3</div>
<div class="t" style="left:1717px;top:595px;font-size:14px;color:rgba(0,0,0,0.65);font-weight:normal;letter-spacing:-0.5px">0</div>
<div class="tag no" style="left:1795px;top:593px">未审核</div>
<svg style="left:210px;top:644px" width="16" height="16" viewBox="0 0 16 16"><rect x="0.5" y="0.5" width="15" height="15" rx="2" fill="#fff" stroke="#d9d9d9"/></svg>
<div class="t" style="left:292px;top:642px;font-size:14px;color:#2a7ed6;font-weight:normal;">查看</div>
<div class="a" style="left:328px;top:646px;width:1px;height:13px;background:#e8e8e8"></div>
<div class="t" style="left:337px;top:642px;font-size:14px;color:#2a7ed6;font-weight:normal;">编辑</div>
<div class="a" style="left:373px;top:646px;width:1px;height:13px;background:#e8e8e8"></div>
<div class="t" style="left:382px;top:642px;font-size:14px;color:#2a7ed6;font-weight:normal;">复制</div>
<div class="a" style="left:418px;top:646px;width:1px;height:13px;background:#e8e8e8"></div>
<div class="t" style="left:427px;top:642px;font-size:14px;color:#2a7ed6;font-weight:normal;">删除</div>
<div class="t" style="left:652px;top:642px;font-size:14px;color:rgba(0,0,0,0.65);font-weight:normal;"><span style="letter-spacing:-1.4px">LSCK</span><span style="letter-spacing:-0.29px">00000002024</span></div>
<div class="t" style="left:859px;top:642px;font-size:14px;color:rgba(0,0,0,0.65);font-weight:normal;">香烟</div>
<div class="t" style="left:1143px;top:642px;font-size:14px;color:rgba(0,0,0,0.65);font-weight:normal;letter-spacing:-0.22px">2023-04-07 20:30:00</div>
<div class="t" style="left:1330px;top:642px;font-size:14px;color:rgba(0,0,0,0.65);font-weight:normal;">测试用户</div>
<div class="t" style="left:1433px;top:642px;font-size:14px;color:rgba(0,0,0,0.65);font-weight:normal;">1</div>
<div class="t" style="left:1511px;top:642px;font-size:14px;color:rgba(0,0,0,0.65);font-weight:normal;letter-spacing:-0.5px">3</div>
<div class="t" style="left:1614px;top:642px;font-size:14px;color:rgba(0,0,0,0.65);font-weight:normal;letter-spacing:-0.5px">3</div>
<div class="t" style="left:1717px;top:642px;font-size:14px;color:rgba(0,0,0,0.65);font-weight:normal;letter-spacing:-0.5px">0</div>
<div class="tag no" style="left:1795px;top:640px">未审核</div>
<svg style="left:210px;top:691px" width="16" height="16" viewBox="0 0 16 16"><rect x="0.5" y="0.5" width="15" height="15" rx="2" fill="#fff" stroke="#d9d9d9"/></svg>
<div class="t" style="left:292px;top:689px;font-size:14px;color:#2a7ed6;font-weight:normal;">查看</div>
<div class="a" style="left:328px;top:693px;width:1px;height:13px;background:#e8e8e8"></div>
<div class="t" style="left:337px;top:689px;font-size:14px;color:#2a7ed6;font-weight:normal;">编辑</div>
<div class="a" style="left:373px;top:693px;width:1px;height:13px;background:#e8e8e8"></div>
<div class="t" style="left:382px;top:689px;font-size:14px;color:#2a7ed6;font-weight:normal;">复制</div>
<div class="a" style="left:418px;top:693px;width:1px;height:13px;background:#e8e8e8"></div>
<div class="t" style="left:427px;top:689px;font-size:14px;color:#2a7ed6;font-weight:normal;">删除</div>
<div class="t" style="left:652px;top:689px;font-size:14px;color:rgba(0,0,0,0.65);font-weight:normal;"><span style="letter-spacing:-1.4px">LSCK</span><span style="letter-spacing:-0.29px">00000002021</span></div>
<div class="t" style="left:859px;top:689px;font-size:14px;color:rgba(0,0,0,0.65);font-weight:normal;">超迷你维达面纸 8片</div>
<div class="t" style="left:1143px;top:689px;font-size:14px;color:rgba(0,0,0,0.65);font-weight:normal;letter-spacing:-0.22px">2023-04-07 20:27:20</div>
<div class="t" style="left:1330px;top:689px;font-size:14px;color:rgba(0,0,0,0.65);font-weight:normal;">测试用户</div>
<div class="t" style="left:1433px;top:689px;font-size:14px;color:rgba(0,0,0,0.65);font-weight:normal;">1</div>
<div class="t" style="left:1511px;top:689px;font-size:14px;color:rgba(0,0,0,0.65);font-weight:normal;letter-spacing:-0.5px">3.265</div>
<div class="t" style="left:1614px;top:689px;font-size:14px;color:rgba(0,0,0,0.65);font-weight:normal;letter-spacing:-0.5px">3.27</div>
<div class="t" style="left:1717px;top:689px;font-size:14px;color:rgba(0,0,0,0.65);font-weight:normal;letter-spacing:-0.5px">0</div>
<div class="tag no" style="left:1795px;top:687px">未审核</div>
<div class="t" style="left:1461px;top:749px;font-size:14px;color:rgba(0,0,0,0.65);font-weight:normal;">1-10 共34条</div>
<svg style="left:1552px;top:754px" width="8" height="11" viewBox="0 0 8 11"><path d="M6.5 0.8 L1.5 5.5 L6.5 10.2" fill="none" stroke="#bfbfbf" stroke-width="1.3"/></svg>
<div class="a" style="left:1568px;top:747px;width:24px;height:24px;border:1px solid #3a8ee0;border-radius:4px"></div>
<div class="t" style="left:1568px;top:749px;width:24px;text-align:center;font-size:14px;color:#3a7cc8">1</div>
<div class="t" style="left:1592px;top:749px;width:24px;text-align:center;font-size:14px;color:rgba(0,0,0,0.65)">2</div>
<div class="t" style="left:1616px;top:749px;width:24px;text-align:center;font-size:14px;color:rgba(0,0,0,0.65)">3</div>
<div class="t" style="left:1640px;top:749px;width:24px;text-align:center;font-size:14px;color:rgba(0,0,0,0.65)">4</div>
<svg style="left:1672px;top:754px" width="8" height="11" viewBox="0 0 8 11"><path d="M1.5 0.8 L6.5 5.5 L1.5 10.2" fill="none" stroke="#595959" stroke-width="1.3"/></svg>
<div class="a" style="left:1691px;top:747px;width:84px;height:24px;border:1px solid #d9d9d9;border-radius:4px"></div>
<div class="t" style="left:1698px;top:749px;font-size:14px;color:rgba(0,0,0,0.65);font-weight:normal;">10 条/页</div>
<svg style="left:1755px;top:755px" width="10" height="7" viewBox="0 0 10 7"><path d="M0.8 0.8 L5 5.5 L9.2 0.8" fill="none" stroke="#bfbfbf" stroke-width="1.1"/></svg>
<div class="t" style="left:1783px;top:749px;font-size:14px;color:rgba(0,0,0,0.65);font-weight:normal;">跳至</div>
<div class="a" style="left:1819px;top:747px;width:44px;height:24px;border:1px solid #d9d9d9;border-radius:4px"></div>
<div class="t" style="left:1871px;top:749px;font-size:14px;color:rgba(0,0,0,0.65);font-weight:normal;">页</div>
<div class="a" style="left:0;top:0;width:1px;height:855px;background:rgba(0,0,0,0.85)"></div>
</body></html>
